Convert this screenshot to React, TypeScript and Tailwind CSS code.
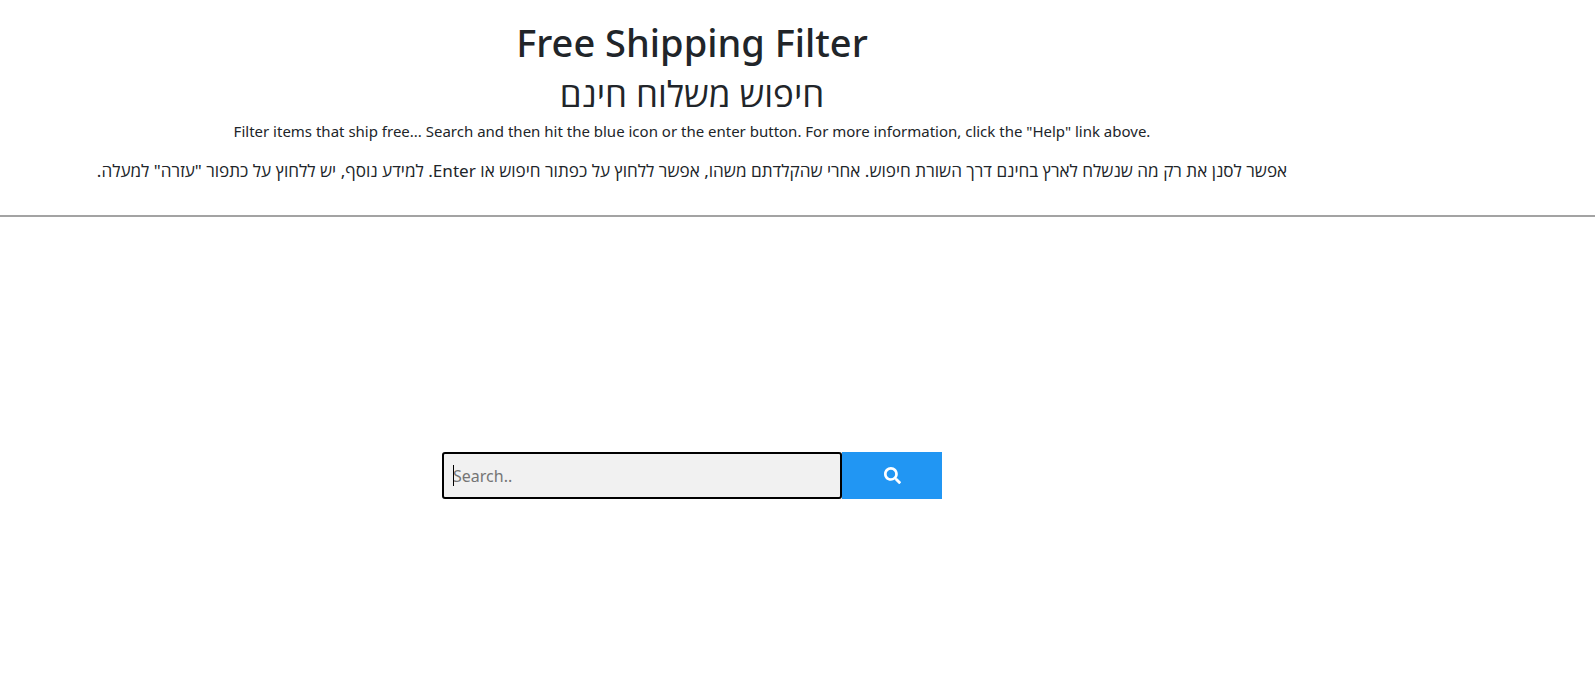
import { FaSearch } from "react-icons/fa";

const font = { fontFamily: '"Noto Sans", "Open Sans", sans-serif' };

export default function App() {
  return (
    <div className="h-[679px] w-[1595px] overflow-hidden bg-white text-[#212529]" style={font}>
      <header className="w-[1384px] text-center">
        <h1 className="pt-[17px] text-[38px] leading-[50px] font-medium">Free Shipping Filter</h1>
        <h2 className="mt-[5px] text-[35px] leading-[44px] font-medium">חיפוש משלוח חינם</h2>
        <p className="mt-[3px] text-[15px] leading-6">
          Filter items that ship free... Search and then hit the blue icon or the enter button. For more information, click the "Help" link above.
        </p>
        <p className="mt-4 text-[17.12px] leading-6" dir="rtl">
          אפשר לסנן את רק מה שנשלח לארץ בחינם דרך השורת חיפוש. אחרי שהקלדתם משהו, אפשר ללחוץ על כפתור חיפוש או Enter. למידע נוסף, יש ללחוץ על כתפור "עזרה" למעלה.
        </p>
      </header>
      <hr className="mt-[32px] border-0 border-t-2 border-[#a3a3a3]" />
      <div className="w-[1384px] pt-[235px]">
        <form className="mx-auto flex h-[47px] w-[500px]">
          <div className="relative h-full w-[400px] rounded-[3px] border-2 border-black bg-[#f1f1f1]">
            <span className="absolute left-[9px] top-[11px] h-[21px] w-px bg-black" />
            <input
              className="h-full w-full bg-transparent pl-[9px] text-[16px] outline-none placeholder:text-[#757575]"
              placeholder="Search.."
              type="text"
            />
          </div>
          <button type="button" className="flex h-full w-[100px] items-center justify-center bg-[#2196f3] text-white">
            <FaSearch size={17} />
          </button>
        </form>
      </div>
    </div>
  );
}
